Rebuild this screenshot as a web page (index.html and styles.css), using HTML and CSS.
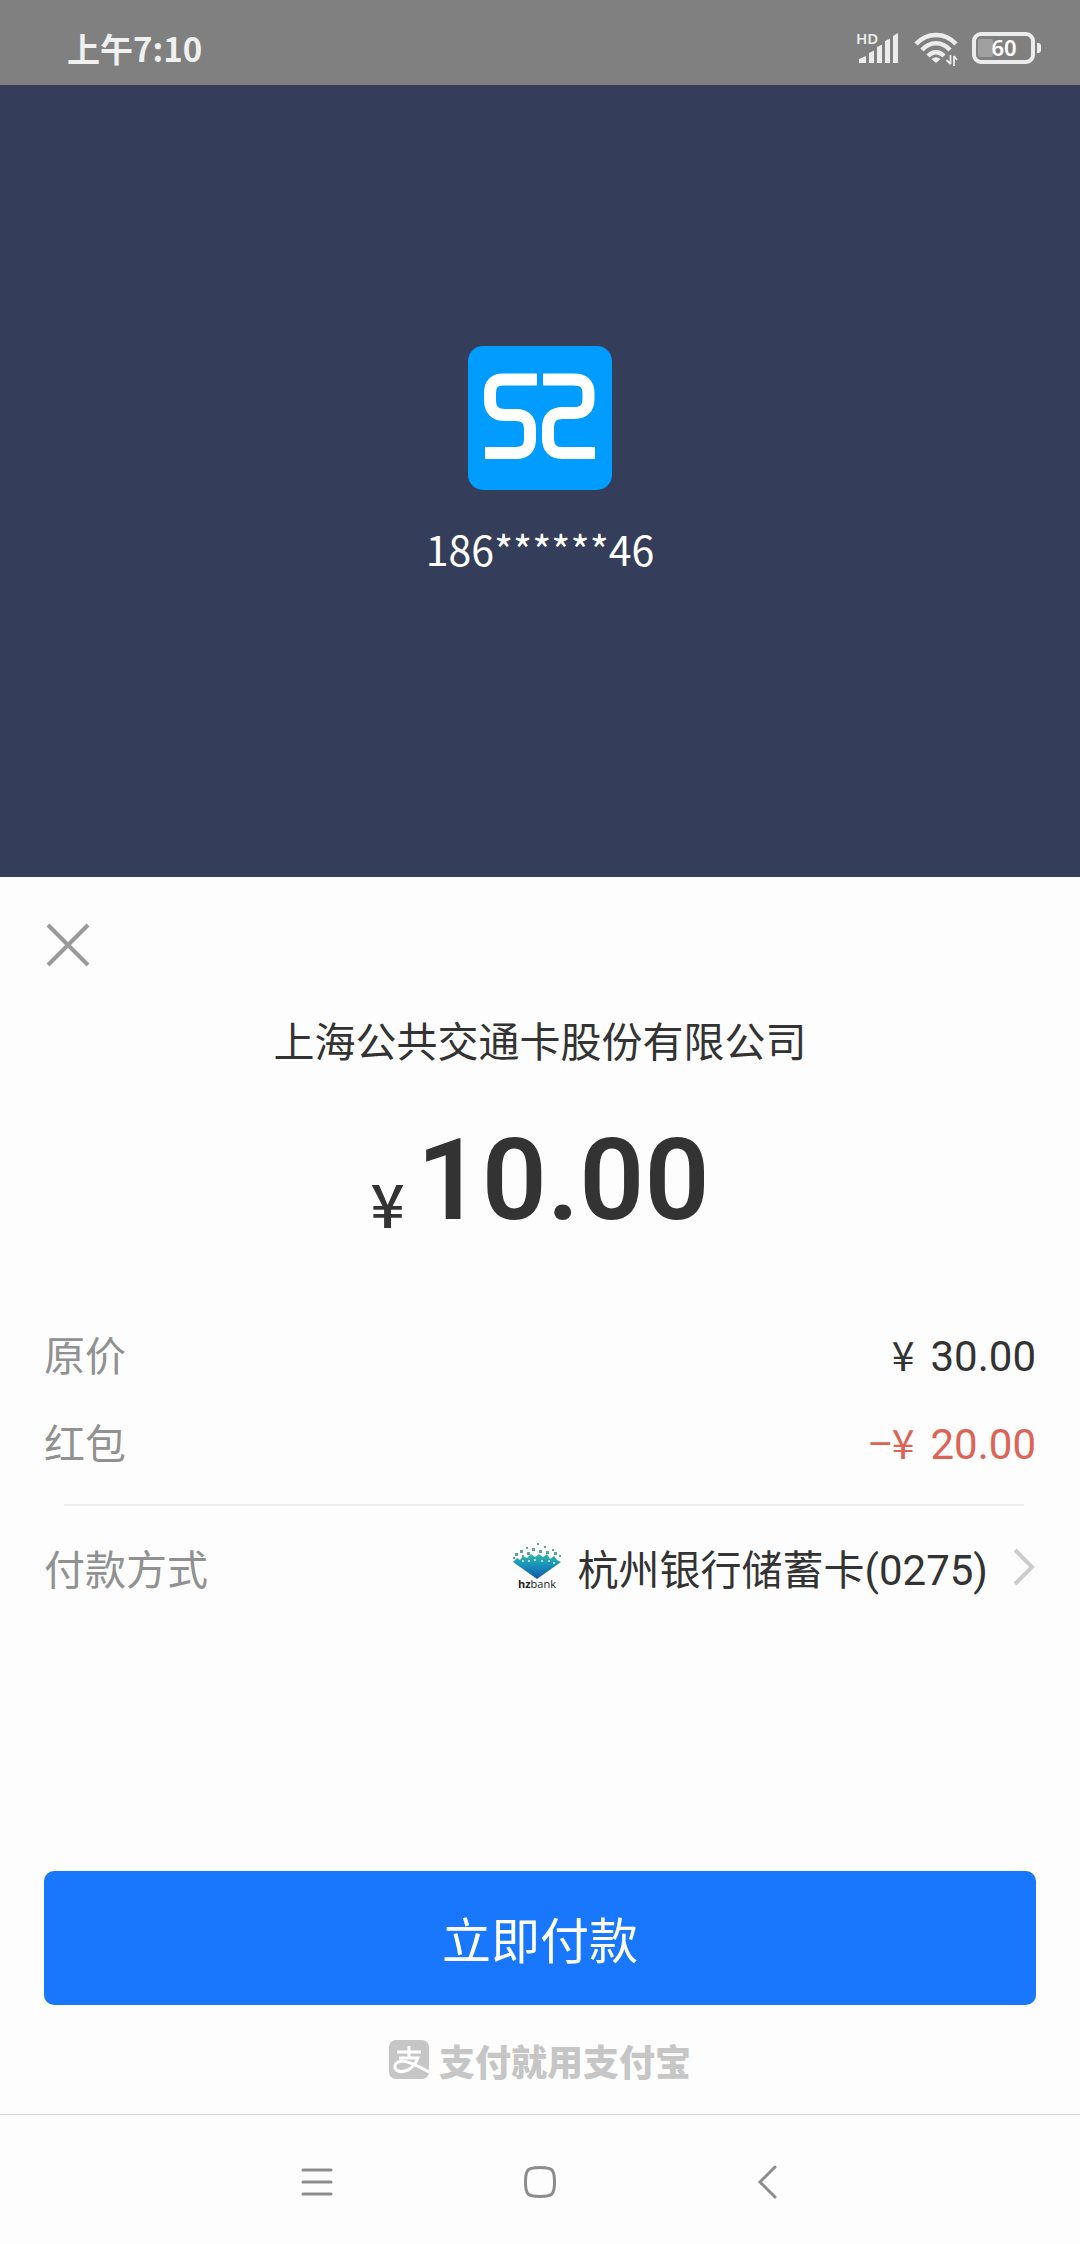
FILE: index.html
```html
<!DOCTYPE html>
<html lang="zh-CN">
<head>
<meta charset="utf-8">
<meta name="viewport" content="width=device-width, initial-scale=1">
<title>付款</title>
<link rel="stylesheet" href="styles.css">
</head>
<body>
<div class="page">
  <header class="status-bar">
    <time class="clock">上午7:10</time>
    <div class="status-icons">
      <svg class="signal" width="44" height="44" viewBox="0 -7 44 44" fill="#ececec">
        <text x="0" y="11" class="signal-label">HD</text>
        <path d="M3 30V26L10 23V30ZM13 30V20L18 17.500V30ZM21 30V14L26 11.500V30ZM29 30V8L34 5.500V30ZM37 30V3L42 0V30Z"/>
      </svg>
      <svg class="wifi" width="44" height="36" viewBox="0 0 44 36" fill="none" stroke="#ececec" stroke-width="4.500">
        <path d="M2 14C13 2 31 2 42 14M8 20C16 11 28 11 36 20M14 26C19 21 25 21 30 26"/>
        <path d="M22 33L17.500 29Q22 25.500 26.500 29Z" fill="#ececec" stroke="none"/>
        <path d="M36.500 25V34M32.500 30L36.500 34M40 36V26M40 26L43 30" stroke-width="1.800"/>
      </svg>
      <svg class="battery" width="70" height="32" viewBox="0 0 70 32">
        <rect x="2" y="2" width="59" height="28" rx="7" fill="none" stroke="#ececec" stroke-width="4"/>
        <rect x="6" y="7" width="15" height="18" rx="2" fill="#a0a0a0"/>
        <path d="M65 11h1a3 3 0 0 1 3 3v4a3 3 0 0 1-3 3h-1z" fill="#ececec"/>
        <text x="32" y="24" text-anchor="middle" class="battery-label">60</text>
      </svg>
    </div>
  </header>

  <section class="account">
    <svg class="account-logo" viewBox="0 0 144 144" role="img" aria-label="S2">
      <rect width="144" height="144" rx="15" fill="#009cff"/>
      <g fill="none" stroke="#fff" stroke-width="12">
        <path d="M69 33.500H35Q22 33.500 22 47V54Q22 69 37 69H48Q62 69 62 83V93Q62 107 48 107H17"/>
        <path d="M75 33.500H106Q120.500 33.500 120.500 47V53Q120.500 67 106 67H95Q80 67 80 82V92Q80 107 94 107H127"/>
      </g>
    </svg>
    <p class="account-name">186******46</p>
  </section>

  <main class="sheet">
    <button class="close" type="button" aria-label="关闭">
      <svg width="46" height="46" viewBox="0 0 46 46" stroke="#999" stroke-width="4"><path d="M3 3L43 43M43 3L3 43"/></svg>
    </button>
    <h1 class="payee">上海公共交通卡股份有限公司</h1>
    <p class="amount"><span class="currency">¥</span><span class="figure">10.00</span></p>

    <dl class="details">
      <div class="row"><dt>原价</dt><dd class="money"><span>¥</span><span class="digits">30.00</span></dd></div>
      <div class="row"><dt>红包</dt><dd class="money discount"><span>−¥</span><span class="digits">20.00</span></dd></div>
    </dl>
    <hr class="divider">
    <div class="row">
      <span class="label" id="method">付款方式</span>
      <button class="method" type="button" aria-describedby="method">
        <svg class="bank" width="50" height="52" viewBox="0 -1 50 52">
          <defs><linearGradient id="gem" x1="0" y1="0" x2="0" y2="1"><stop offset="0" stop-color="#35b9a0"/><stop offset=".45" stop-color="#1791bb"/><stop offset="1" stop-color="#1457a5"/></linearGradient></defs>
          <path d="M1 20L5 16L8 18L11 14L15 16L19 12L23 15L27 12L31 15L35 12L38 17L42 14L45 18L49 20L25 37Z" fill="url(#gem)"/>
          <path d="M3 11h3v3h-3zM8 8h3v3h-3zM10 13h2v2h-2zM14 5h2v2h-2zM15 10h3v3h-3zM20 6h3v3h-3zM25 1h2v2h-2zM27 8h3v3h-3zM32 4h2v2h-2zM34 9h3v3h-3zM40 7h2v2h-2zM42 10h3v3h-3zM47 13h2v2h-2zM1 15h2v2h-2z" fill="#5aa58f"/>
          <path d="M10 18h2v2h-2zM16 18h2v2h-2zM22 17h2v2h-2zM29 18h2v2h-2zM36 18h2v2h-2zM41 20h2v2h-2z" fill="#a8e0cf"/>
          <text x="25" y="46" text-anchor="middle" class="bank-label"><tspan font-weight="700">hz</tspan>bank</text>
        </svg>
        <span class="card">杭州银行储蓄卡<span class="digits">(0275)</span></span>
        <svg class="chevron" width="24" height="40" viewBox="0 0 24 40" fill="none" stroke="#ccc" stroke-width="4"><path d="M3 3L20 20L3 37"/></svg>
      </button>
    </div>

    <button class="pay" type="button">立即付款</button>
    <p class="slogan">
      <svg width="40" height="40" viewBox="0 0 40 40">
        <rect width="40" height="39" rx="7" fill="#c6c6c6"/>
        <path d="M8 12H32M20 6V18M10 18H29Q26 26 19 30Q9 34 6 28Q5 22 13 21Q20 21 40 32" fill="none" stroke="#fff" stroke-width="3"/>
      </svg>
      <span>支付就用支付宝</span>
    </p>
  </main>

  <nav class="system-nav">
    <button type="button" aria-label="最近任务"><svg width="36" height="36" viewBox="0 0 36 36"><path d="M4 6H32M4 18H32M4 30H32"/></svg></button>
    <button type="button" aria-label="主屏幕"><svg width="36" height="36" viewBox="0 0 36 36"><path d="M18 3.500C30 3.500 32.500 5 32.500 18S30 32.500 18 32.500S3.500 31 3.500 18S6 3.500 18 3.500Z"/></svg></button>
    <button type="button" aria-label="返回"><svg width="36" height="36" viewBox="0 0 36 36"><path d="M30 3L15 18L30 33"/></svg></button>
  </nav>
</div>
</body>
</html>
```
FILE: styles.css
```css
* { box-sizing: border-box; }

body {
  margin: 0;
  background: #fdfdfd;
  color: #333;
  font-family: "Noto Sans CJK SC", "Noto Sans", sans-serif;
  font-size: 41px;
  line-height: 60px;
}

p, h1, dl, dd { margin: 0; }
svg { display: block; flex: none; }

button {
  padding: 0;
  border: 0;
  background: none;
  color: inherit;
  font: inherit;
  cursor: pointer;
}

.page {
  display: flex;
  flex-direction: column;
  min-height: 100vh;
}

.status-bar {
  display: flex;
  justify-content: space-between;
  align-items: center;
  padding: 24px 38px 13px 67px;
  background: #808080;
  color: #f0f0f0;
}
.clock {
  font-size: 33px;
  font-weight: 700;
  line-height: 48px;
}
.status-icons {
  display: flex;
  align-items: center;
  gap: 14px;
}
.signal-label { font: 600 15px "Noto Sans", sans-serif; }
.battery-label { font: 600 22px "Noto Sans", sans-serif; fill: #fff; }

.account {
  display: flex;
  flex-direction: column;
  align-items: center;
  gap: 28px;
  height: 792px;
  padding-top: 261px;
  background: #343e5b;
  color: #fff;
}
.account-logo { width: 144px; height: 144px; }

.sheet {
  display: flex;
  flex-direction: column;
  flex: 1;
  padding: 44px 44px 22px;
}
.close {
  align-self: flex-start;
  padding: 1px;
}
.payee {
  margin-top: 40px;
  font-size: 41px;
  font-weight: 400;
  line-height: 60px;
  text-align: center;
}
.amount {
  display: flex;
  justify-content: center;
  align-items: flex-end;
  gap: 12px;
  margin-top: 53px;
}
.currency {
  font-size: 60px;
  font-weight: 500;
  line-height: 72px;
}
.figure {
  font-family: Roboto, sans-serif;
  font-size: 114px;
  font-weight: 600;
  line-height: 116px;
}

.details {
  display: grid;
  gap: 28px;
  margin-top: 85px;
}
.row {
  display: flex;
  justify-content: space-between;
  align-items: center;
}
.row dt, .label { color: #919191; }
.money {
  display: flex;
  align-items: baseline;
  gap: 16px;
}
.digits {
  font-family: Roboto, sans-serif;
  font-size: 42px;
  line-height: 40px;
}
.discount { color: #dc6356; }
.divider {
  height: 2px;
  margin: 33px 12px 31px 20px;
  border: 0;
  background: #ececec;
}
.method {
  display: flex;
  align-items: center;
}
.card { margin: 0 24px 0 16px; }
.bank-label { font: 11px "Open Sans", sans-serif; fill: #222; }

.pay {
  height: 134px;
  margin-top: 274px;
  border-radius: 10px;
  background: #1977fd;
  color: #fff;
  font-size: 49px;
}
.slogan {
  display: flex;
  justify-content: center;
  align-items: center;
  gap: 10px;
  margin-top: 25px;
  color: #c6c6c6;
  font-size: 36px;
  font-weight: 900;
}

.system-nav {
  display: flex;
  padding: 0 19%;
  border-top: 1px solid #ddd;
}
.system-nav button {
  display: flex;
  flex: 1;
  justify-content: center;
  padding: 49px 0 44px;
}
.system-nav svg {
  fill: none;
  stroke: #8c8c8c;
  stroke-width: 3;
  stroke-linecap: round;
}
```
